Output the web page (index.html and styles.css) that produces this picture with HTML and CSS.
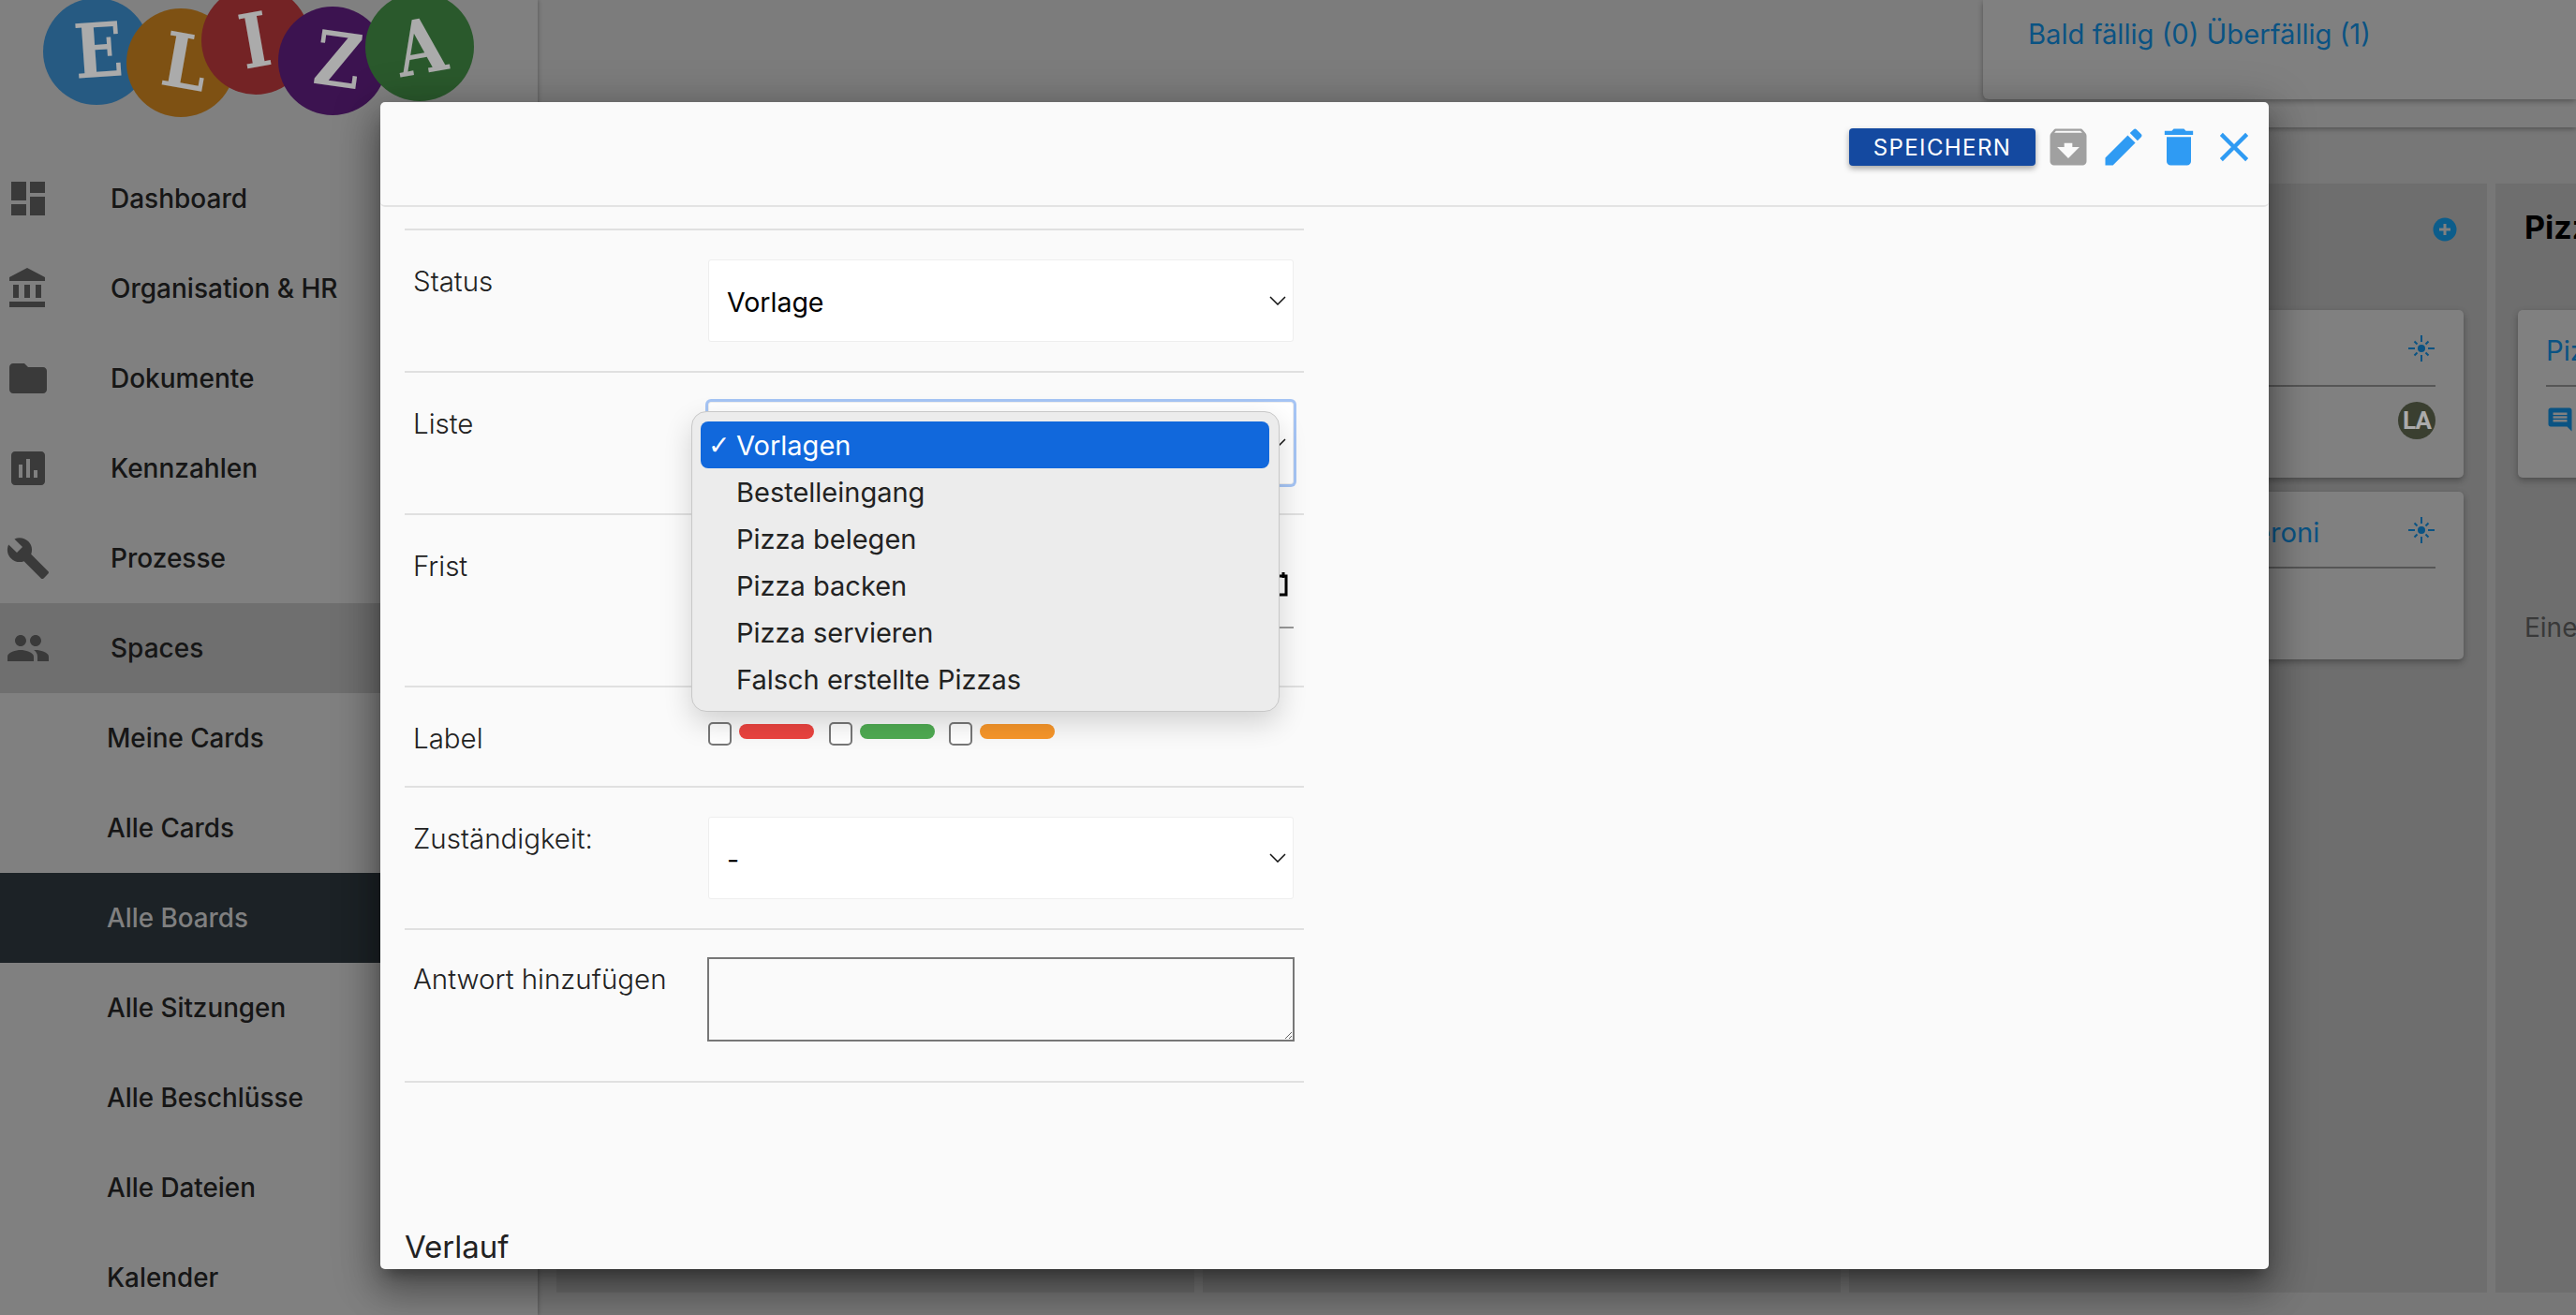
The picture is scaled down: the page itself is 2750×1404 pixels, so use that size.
FILE: index.html
```html
<!DOCTYPE html>
<html lang="de">
<head>
<meta charset="utf-8">
<title>Eliza</title>
<link rel="stylesheet" href="styles.css">
</head>
<body>
<div class="app">
  <aside class="sidebar">
    <div class="logo">
      <svg class="logo-svg" width="574" height="164" viewBox="0 0 574 164">
        <circle cx="103" cy="55" r="57" fill="#3a87c2"/>
        <text class="logo-letter" transform="translate(107 82) rotate(-4) scale(.85 1)">E</text>
        <circle cx="193" cy="67" r="58" fill="#bd7a1d"/>
        <text class="logo-letter" transform="translate(193 94) rotate(10) scale(.85 1)">L</text>
        <circle cx="273" cy="43" r="58" fill="#ae3538"/>
        <text class="logo-letter" transform="translate(277 71) rotate(-10) scale(.85 1)">I</text>
        <circle cx="355" cy="65" r="58" fill="#5a1d78"/>
        <text class="logo-letter" transform="translate(357 92) rotate(8) scale(.85 1)">Z</text>
        <circle cx="448" cy="50" r="58" fill="#3f8542"/>
        <text class="logo-letter" transform="translate(454 78) rotate(-10) scale(.85 1)">A</text>
      </svg>
    </div>
    <nav class="nav">
      <a class="nav-item"><svg class="nav-icon" viewBox="0 0 24 24"><path d="M3 13h8V3H3v10zm0 8h8v-6H3v6zm10 0h8V11h-8v10zm0-18v6h8V3h-8z"/></svg><span class="nav-label">Dashboard</span></a>
      <a class="nav-item"><svg class="nav-icon" viewBox="0 0 24 24"><path d="M4 10v7h3v-7H4zm6 0v7h3v-7h-3zM2 22h19v-3H2v3zm14-12v7h3v-7h-3zm-4.5-9L2 6v2h19V6l-9.5-5z"/></svg><span class="nav-label">Organisation &amp; HR</span></a>
      <a class="nav-item"><svg class="nav-icon" viewBox="0 0 24 24"><path d="M10 4H4c-1.1 0-1.99.9-1.99 2L2 18c0 1.1.9 2 2 2h16c1.1 0 2-.9 2-2V8c0-1.1-.9-2-2-2h-8l-2-2z"/></svg><span class="nav-label">Dokumente</span></a>
      <a class="nav-item"><svg class="nav-icon" viewBox="0 0 24 24"><path d="M19 3H5c-1.1 0-2 .9-2 2v14c0 1.1.9 2 2 2h14c1.1 0 2-.9 2-2V5c0-1.1-.9-2-2-2zM9 17H7v-7h2v7zm4 0h-2V7h2v10zm4 0h-2v-4h2v4z"/></svg><span class="nav-label">Kennzahlen</span></a>
      <a class="nav-item"><svg class="nav-icon" viewBox="0 0 24 24"><path d="M22.7 19l-9.1-9.1c.9-2.3.4-5-1.5-6.9-2-2-5-2.4-7.4-1.3L9 6 6 9 1.6 4.7C.4 7.1.9 10.1 2.9 12.1c1.9 1.9 4.6 2.4 6.9 1.5l9.1 9.1c.4.4 1 .4 1.4 0l2.3-2.3c.5-.4.5-1.1.1-1.4z"/></svg><span class="nav-label">Prozesse</span></a>
      <a class="nav-item nav-open"><svg class="nav-icon" viewBox="0 0 24 24"><path d="M16 11c1.66 0 2.99-1.34 2.99-3S17.66 5 16 5c-1.66 0-3 1.34-3 3s1.34 3 3 3zm-8 0c1.66 0 2.99-1.34 2.99-3S9.66 5 8 5C6.34 5 5 6.34 5 8s1.34 3 3 3zm0 2c-2.33 0-7 1.17-7 3.5V19h14v-2.5c0-2.33-4.67-3.5-7-3.5zm8 0c-.29 0-.62.02-.97.05 1.16.84 1.97 1.97 1.97 3.45V19h6v-2.5c0-2.33-4.67-3.5-7-3.5z"/></svg><span class="nav-label">Spaces</span></a>
      <a class="nav-item nav-sub">Meine Cards</a>
      <a class="nav-item nav-sub">Alle Cards</a>
      <a class="nav-item nav-sub nav-active">Alle Boards</a>
      <a class="nav-item nav-sub">Alle Sitzungen</a>
      <a class="nav-item nav-sub">Alle Beschlüsse</a>
      <a class="nav-item nav-sub">Alle Dateien</a>
      <a class="nav-item nav-sub">Kalender</a>
    </nav>
  </aside>

  <main class="main">
    <header class="main-head">
      <div class="due-card"><span class="due-text">Bald fällig (0) Überfällig (1)</span></div>
    </header>
    <section class="board">
      <div class="col"></div>
      <div class="col"></div>
      <div class="col">
        <div class="col-head">
          <svg class="plus" viewBox="0 0 26 26"><circle cx="13" cy="13" r="12.5"/><path class="plus-mark" d="M13 7v12M7 13h12"/></svg>
        </div>
        <article class="card">
          <div class="card-head">
            <svg class="spark" viewBox="0 0 28 28"><use href="#spark-shape"/></svg>
          </div>
          <div class="card-foot"><span class="avatar">LA</span></div>
        </article>
        <article class="card">
          <div class="card-head">
            <span class="card-title card-title-far">Pizza Peperoni</span>
            <svg class="spark" viewBox="0 0 28 28"><use href="#spark-shape"/></svg>
          </div>
        </article>
      </div>
      <div class="col">
        <div class="col-head"><h2 class="col-title">Pizza</h2></div>
        <article class="card">
          <div class="card-head"><span class="card-title">Pizza</span></div>
          <div class="card-foot card-foot-left">
            <svg class="comment" viewBox="0 0 24 24"><path d="M21.99 4c0-1.1-.89-2-1.99-2H4c-1.1 0-2 .9-2 2v12c0 1.1.9 2 2 2h14l4 4-.01-18zM18 14H6v-2h12v2zm0-3H6V9h12v2zm0-3H6V6h12v2z"/></svg>
          </div>
        </article>
        <p class="col-empty">Eine</p>
      </div>
    </section>
  </main>
</div>

<svg class="defs" width="0" height="0">
  <symbol id="spark-shape" viewBox="0 0 28 28">
    <circle cx="14" cy="14" r="4"/>
    <path class="spark-rays" d="M14 0v7M14 21v7M0 14h7M21 14h7M6.5 6.5l3 3M21.5 6.5l-3 3M6.5 21.5l3-3M21.5 21.5l-3-3"/>
  </symbol>
</svg>

<div class="overlay"></div>

<div class="modal">
  <div class="modal-head">
    <button class="save">SPEICHERN</button>
    <svg class="tool tool-gray" viewBox="0 0 24 24"><path d="M20.54 5.23l-1.39-1.68C18.88 3.21 18.47 3 18 3H6c-.47 0-.88.21-1.16.55L3.46 5.23C3.17 5.57 3 6.02 3 6.5V19c0 1.1.9 2 2 2h14c1.1 0 2-.9 2-2V6.5c0-.48-.17-.93-.46-1.27zM12 17.5L6.5 12H10v-2h4v2h3.5L12 17.5zM5.12 5l.81-1h12l.94 1H5.12z"/></svg>
    <svg class="tool" viewBox="0 0 24 24"><path d="M3 17.25V21h3.75L17.81 9.94l-3.75-3.75L3 17.25zM20.71 7.04c.39-.39.39-1.02 0-1.41l-2.34-2.34c-.39-.39-1.02-.39-1.41 0l-1.83 1.83 3.75 3.75 1.83-1.83z"/></svg>
    <svg class="tool" viewBox="0 0 24 24"><path d="M6 19c0 1.1.9 2 2 2h8c1.1 0 2-.9 2-2V7H6v12zM19 4h-3.5l-1-1h-5l-1 1H5v2h14V4z"/></svg>
    <svg class="tool" viewBox="0 0 24 24"><path d="M19 6.41L17.59 5 12 10.59 6.41 5 5 6.41 10.59 12 5 17.59 6.41 19 12 13.41 17.59 19 19 17.59 13.41 12z"/></svg>
  </div>
  <div class="modal-body">
    <form class="form">
      <div class="row">
        <span class="row-label">Status</span>
        <div class="select"><span class="select-value">Vorlage</span><svg class="chev" viewBox="0 0 18 10"><path d="M1 1l8 8 8-8"/></svg></div>
      </div>
      <div class="row">
        <span class="row-label">Liste</span>
        <div class="select select-focus">
          <span class="select-value"></span><svg class="chev" viewBox="0 0 18 10"><path d="M1 1l8 8 8-8"/></svg>
          <ul class="popup">
            <li class="popup-item popup-selected"><span class="popup-check">✓</span>Vorlagen</li>
            <li class="popup-item"><span class="popup-check"></span>Bestelleingang</li>
            <li class="popup-item"><span class="popup-check"></span>Pizza belegen</li>
            <li class="popup-item"><span class="popup-check"></span>Pizza backen</li>
            <li class="popup-item"><span class="popup-check"></span>Pizza servieren</li>
            <li class="popup-item"><span class="popup-check"></span>Falsch erstellte Pizzas</li>
          </ul>
        </div>
      </div>
      <div class="row row-date">
        <span class="row-label">Frist</span>
        <div class="date">
          <svg class="cal" viewBox="0 0 24 27"><path d="M3 5h18v20H3z" fill="none" stroke="#000" stroke-width="3"/><path d="M18 1v6M6 1v6" stroke="#000" stroke-width="3"/></svg>
        </div>
      </div>
      <div class="row row-labels">
        <span class="row-label row-label-tight">Label</span>
        <div class="labels">
          <input class="check" type="checkbox"><span class="tag tag-red"></span>
          <input class="check" type="checkbox"><span class="tag tag-green"></span>
          <input class="check" type="checkbox"><span class="tag tag-orange"></span>
        </div>
      </div>
      <div class="row">
        <span class="row-label">Zuständigkeit:</span>
        <div class="select"><span class="select-value">-</span><svg class="chev" viewBox="0 0 18 10"><path d="M1 1l8 8 8-8"/></svg></div>
      </div>
      <div class="row row-answer">
        <span class="row-label">Antwort hinzufügen</span>
        <textarea class="answer"></textarea>
      </div>
    </form>
    <h3 class="history">Verlauf</h3>
  </div>
</div>
</body>
</html>
```

FILE: styles.css
```css
* { box-sizing: border-box; }
html, body { margin: 0; padding: 0; }
body {
  width: 2750px;
  height: 1404px;
  overflow: hidden;
  position: relative;
  font-family: Inter, "Liberation Sans", sans-serif;
  background: #b2b2b2;
}
.defs { position: absolute; }

.app { display: flex; width: 2750px; height: 1404px; }

/* sidebar */
.sidebar {
  width: 574px;
  flex: none;
  background: #bfbfbf;
  box-shadow: 1px 0 4px rgba(0,0,0,.25);
  position: relative;
  z-index: 2;
}
.logo { height: 164px; }
.logo-svg { display: block; }
.logo-letter {
  font-family: "DejaVu Serif", "Liberation Serif", serif;
  font-weight: 700;
  font-size: 80px;
  fill: #fff;
  text-anchor: middle;
}
.nav-item {
  display: flex;
  align-items: center;
  height: 96px;
  font-size: 28px;
  font-weight: 500;
  color: #222;
}
.nav-icon { width: 48px; height: 48px; margin-left: 6px; fill: #575757; flex: none; }
.nav-label { margin-left: 64px; }
.nav-open { background: #a6a6a6; }
.nav-sub { padding-left: 114px; font-size: 27.8px; }
.nav-active { background: #2a343a; color: #bfbfbf; }

/* main */
.main { flex: 1; display: flex; flex-direction: column; min-width: 0; }
.main-head {
  height: 136px;
  flex: none;
  background: #bababa;
  box-shadow: 0 2px 5px rgba(0,0,0,.3);
  padding-left: 1543px;
}
.due-card {
  height: 106px;
  background: #bfbfbf;
  border-radius: 0 0 0 6px;
  box-shadow: 0 2px 6px rgba(0,0,0,.35);
  padding: 15px 0 0 48px;
}
.due-text { font-size: 29.2px; color: #0f7cc4; line-height: 44px; }

.board {
  flex: 1;
  display: flex;
  gap: 9px;
  padding: 60px 0 24px 20px;
  overflow: hidden;
}
.col {
  width: 681px;
  flex: none;
  background: #a4a4a4;
  padding: 0 24px;
}
.col-head {
  height: 135px;
  display: flex;
  justify-content: flex-end;
  padding-top: 36px;
  align-items: flex-start;
}
.col:last-child .col-head { justify-content: flex-start; padding: 25px 0 0 7px; }
.col-title { margin: 0; font-size: 34px; line-height: 44px; font-weight: 700; color: #000; }
.plus { width: 26px; height: 26px; fill: #128bd0; margin-right: 8px; }
.plus-mark { stroke: #bfbfbf; stroke-width: 3; fill: none; }
.card {
  width: 632px;
  height: 179px;
  background: #bfbfbf;
  border-radius: 5px;
  box-shadow: 0 3px 7px rgba(0,0,0,.3);
  padding: 0 30px;
  margin-bottom: 15px;
}
.card-head {
  height: 82px;
  border-bottom: 2px solid #808080;
  display: flex;
  align-items: center;
  justify-content: space-between;
}
.card-head .spark:only-child { margin-left: auto; }
.card-title { font-size: 29.2px; color: #0f7cc4; margin-top: 6px; }
.card-title-far { padding-left: 243px; }
.spark { width: 28px; height: 28px; margin: 2px 1px 0 0; fill: #0f7cc4; }
.spark-rays { stroke: #0f7cc4; stroke-width: 2; fill: none; }
.card-foot { display: flex; justify-content: flex-end; padding-top: 16px; }
.card-foot-left { justify-content: flex-start; padding-top: 20px; }
.avatar {
  width: 40px;
  height: 40px;
  border-radius: 50%;
  background: #575e48;
  color: #fff;
  font-size: 26px;
  font-weight: 700;
  letter-spacing: -.8px;
  font-family: Roboto, Inter, sans-serif;
  display: flex;
  align-items: center;
  justify-content: center;
}
.comment { width: 30px; height: 30px; fill: #0f7cc4; }
.col-empty { margin: 143px 0 0 7px; font-size: 28px; color: #555; }

/* overlay + modal */
.overlay { position: absolute; inset: 0; background: rgba(0,0,0,.33); z-index: 3; }
.modal {
  position: absolute;
  left: 406px;
  top: 109px;
  width: 2016px;
  height: 1246px;
  z-index: 4;
  background: #fafafa;
  border-radius: 5px;
  overflow: hidden;
  box-shadow: 0 11px 15px -7px rgba(0,0,0,.35), 0 24px 38px 3px rgba(0,0,0,.24), 0 9px 46px 8px rgba(0,0,0,.22);
}
.modal-head {
  height: 112px;
  border-bottom: 2px solid #e3e3e3;
  border-radius: 0 0 5px 5px;
  display: flex;
  align-items: flex-start;
  justify-content: flex-end;
  gap: 7px;
  padding: 20px 11px 0 0;
}
.save {
  width: 199px;
  height: 40px;
  margin: 8px 2px 0 0;
  border: 0;
  border-radius: 4px;
  background: #1449a0;
  color: #fff;
  font-family: Inter, sans-serif;
  font-size: 24px;
  font-weight: 400;
  letter-spacing: 1.4px;
  box-shadow: 0 3px 6px rgba(0,0,0,.35);
}
.tool { width: 52px; height: 52px; fill: #2f9bf3; flex: none; margin-top: 2px; }
.tool-gray { fill: #a0a0a0; }
.modal-body { padding: 23px 0 0 26px; }
.form { width: 960px; border-top: 2px solid #e0e0e0; }
.row {
  display: flex;
  padding: 31px 11px 31px 9px;
  border-bottom: 2px solid #e0e0e0;
}
.row-label {
  width: 315px;
  flex: none;
  margin-top: 6px;
  font-size: 29.5px;
  font-weight: 300;
  line-height: 34px;
  color: #222;
}
.select {
  position: relative;
  width: 625px;
  height: 88px;
  background: #fff;
  border: 1px solid #eee;
  border-radius: 3px;
  display: flex;
  align-items: center;
  justify-content: space-between;
  padding: 0 7px 0 19px;
  font-size: 28.5px;
  color: #000;
}
.select-value { padding-top: 2px; }
.select-focus { box-shadow: 0 0 0 3px #a5c4f4; }
.chev { width: 18px; height: 10px; fill: none; stroke: #111; stroke-width: 1.5; }
.popup {
  position: absolute;
  left: -19px;
  top: 9px;
  z-index: 5;
  width: 628px;
  height: 321px;
  margin: 0;
  padding: 10px 10px 10px 9px;
  list-style: none;
  background: #ececec;
  border: 1px solid #c8c8c8;
  border-radius: 16px;
  box-shadow: 0 12px 30px rgba(0,0,0,.16);
}
.popup-item {
  height: 50px;
  display: flex;
  align-items: center;
  border-radius: 8px;
  color: #222;
  font-size: 29px;
}
.popup-check { width: 38px; padding-left: 8px; flex: none; font-family: "DejaVu Sans", sans-serif; font-size: 28px; font-weight: 700; }
.popup-selected { background: #1168dc; color: #fff; }
.row-date { padding-bottom: 61px; }
.date {
  width: 627px;
  height: 90px;
  border-bottom: 2px solid #999;
  display: flex;
  justify-content: flex-end;
  padding: 29px 5px 0 0;
}
.cal { width: 24px; height: 27px; }
.row-labels { padding: 37px 11px 0 9px; height: 107px; }
.row-label-tight { margin-top: 0; }
.labels { display: flex; align-items: flex-start; }
.check {
  appearance: none;
  width: 25px;
  height: 25px;
  margin: 0 8px 0 0;
  border: 2px solid #777;
  border-radius: 5px;
  background: #fff;
}
.tag { width: 80px; height: 16px; margin: 2px 15.6px 0 0; border-radius: 8px; }
.tag-red { background: #eb4440; }
.tag-green { background: #4fab52; }
.tag-orange { background: #f7962a; }
.row-answer { padding: 29px 10px 42px 9px; }
.answer {
  display: block;
  width: 627px;
  height: 90px;
  border: 2px solid #777;
  background: #fafafa;
  border-radius: 0;
  margin: 0 0 0 -1px;
}
.history { margin: 155px 0 0; font-size: 33px; line-height: 40px; font-weight: 400; color: #222; }
```
